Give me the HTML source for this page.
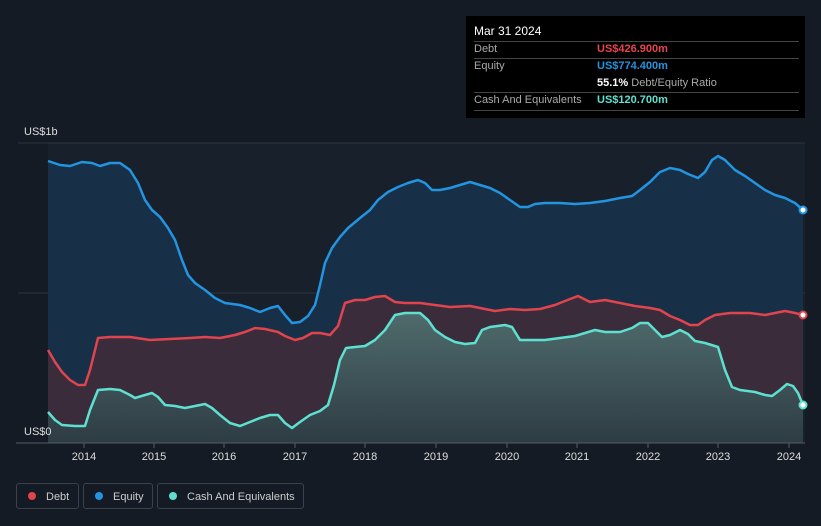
<!DOCTYPE html>
<html><head><style>
body{margin:0;width:821px;height:526px;background:#151b24;overflow:hidden;font-family:"Liberation Sans",sans-serif}
.tip{position:absolute;left:466px;top:16px;width:339px;height:102px;background:#000;color:#fff;font-size:11px}
.row{position:absolute;left:8px;width:325px;border-top:1px solid #444}
.l{position:absolute;left:0;color:#aaa}
.v{position:absolute;left:123px;font-weight:bold}
.leg{position:absolute;top:483px;height:26px;border:1px solid #3a414c;border-radius:3px;color:#ccc;font-size:11px;line-height:26px;box-sizing:border-box}
.dot{display:inline-block;width:8px;height:8px;border-radius:50%;margin:0 10px 0 11px;vertical-align:-0px}
</style></head><body>
<svg width="821" height="526" style="position:absolute;left:0;top:0">
<rect x="48" y="143" width="757" height="300" fill="#18202b"/>
<line x1="18" y1="143" x2="805" y2="143" fill="none" stroke="#2c333d"/>
<line x1="18" y1="293" x2="805" y2="293" stroke="#2c333d"/>
<path id="eq" fill="#173048" d="M48,161 L60,165 70,166 82,162 92,163 100,166 110,163 120,163 130,170 138,183 145,200 152,210 160,217 168,228 175,240 182,260 188,275 195,283 205,290 215,298 225,303 240,305 250,308 260,312 270,308 278,306 285,315 292,323 300,322 308,316 315,305 320,285 325,263 332,248 340,237 348,228 360,218 370,210 378,200 388,192 398,187 408,183 418,180 425,183 432,190 440,190 450,188 460,185 470,182 480,185 490,188 500,193 510,200 520,207 528,207 535,204 545,203 560,203 575,204 590,203 605,201 620,198 632,196 640,190 650,182 660,172 670,168 680,170 688,174 698,178 705,172 712,160 718,156 725,160 735,170 745,176 755,183 765,190 775,195 785,198 795,203 803,210 L803,443 48,443Z"/>
<path fill="#3a2c3a" d="M48,350 L55,362 62,372 70,380 78,385 85,385 90,370 98,338 110,337 130,337 150,340 170,339 190,338 205,337 220,338 235,335 245,332 255,328 265,329 278,332 285,336 295,340 303,338 312,333 320,333 330,335 338,326 345,303 355,300 365,300 375,297 385,296 395,302 405,303 420,303 435,305 450,307 470,306 485,309 495,311 510,309 525,310 540,309 555,305 565,301 578,296 590,302 605,300 620,303 635,306 650,308 660,310 670,316 680,320 690,325 698,325 705,320 715,315 730,313 750,313 765,315 775,313 785,311 795,313 803,315 L803,443 48,443Z"/>
<defs><linearGradient id="g" x1="0" y1="0" x2="0" y2="1"><stop offset="0" stop-color="#4f6b6c"/><stop offset="1" stop-color="#2e3c44"/></linearGradient></defs>
<path fill="url(#g)" d="M48,412 L55,420 62,425 75,426 85,426 90,410 98,390 110,389 120,390 130,395 135,398 145,395 152,393 158,397 165,405 175,406 185,408 195,406 205,404 212,408 220,415 230,423 240,426 250,422 260,418 270,415 278,415 285,423 292,428 300,422 310,415 320,411 328,405 334,385 340,360 346,348 355,347 365,346 375,340 385,330 395,315 405,313 420,313 428,320 435,330 445,337 455,342 465,344 475,343 482,330 490,327 505,325 512,327 520,340 530,340 545,340 560,338 575,336 585,333 595,330 605,332 620,332 632,328 640,323 648,323 655,330 662,337 670,335 680,330 688,334 695,341 705,343 718,347 725,370 732,387 740,390 755,392 765,395 772,396 780,390 787,384 793,386 798,393 803,405 L803,443 48,443Z"/>
<g fill="none" stroke-width="2.5" stroke-linejoin="round">
<path stroke="#2394e0" d="M48,161 L60,165 70,166 82,162 92,163 100,166 110,163 120,163 130,170 138,183 145,200 152,210 160,217 168,228 175,240 182,260 188,275 195,283 205,290 215,298 225,303 240,305 250,308 260,312 270,308 278,306 285,315 292,323 300,322 308,316 315,305 320,285 325,263 332,248 340,237 348,228 360,218 370,210 378,200 388,192 398,187 408,183 418,180 425,183 432,190 440,190 450,188 460,185 470,182 480,185 490,188 500,193 510,200 520,207 528,207 535,204 545,203 560,203 575,204 590,203 605,201 620,198 632,196 640,190 650,182 660,172 670,168 680,170 688,174 698,178 705,172 712,160 718,156 725,160 735,170 745,176 755,183 765,190 775,195 785,198 795,203 803,210"/>
<path stroke="#e0444e" d="M48,350 L55,362 62,372 70,380 78,385 85,385 90,370 98,338 110,337 130,337 150,340 170,339 190,338 205,337 220,338 235,335 245,332 255,328 265,329 278,332 285,336 295,340 303,338 312,333 320,333 330,335 338,326 345,303 355,300 365,300 375,297 385,296 395,302 405,303 420,303 435,305 450,307 470,306 485,309 495,311 510,309 525,310 540,309 555,305 565,301 578,296 590,302 605,300 620,303 635,306 650,308 660,310 670,316 680,320 690,325 698,325 705,320 715,315 730,313 750,313 765,315 775,313 785,311 795,313 803,315"/>
<path stroke="#5ee0d0" d="M48,412 L55,420 62,425 75,426 85,426 90,410 98,390 110,389 120,390 130,395 135,398 145,395 152,393 158,397 165,405 175,406 185,408 195,406 205,404 212,408 220,415 230,423 240,426 250,422 260,418 270,415 278,415 285,423 292,428 300,422 310,415 320,411 328,405 334,385 340,360 346,348 355,347 365,346 375,340 385,330 395,315 405,313 420,313 428,320 435,330 445,337 455,342 465,344 475,343 482,330 490,327 505,325 512,327 520,340 530,340 545,340 560,338 575,336 585,333 595,330 605,332 620,332 632,328 640,323 648,323 655,330 662,337 670,335 680,330 688,334 695,341 705,343 718,347 725,370 732,387 740,390 755,392 765,395 772,396 780,390 787,384 793,386 798,393 803,405"/>
</g>
<circle cx="803" cy="210" r="3.5" fill="#fff" stroke="#2394e0" stroke-width="2"/>
<circle cx="803" cy="315" r="3.5" fill="#fff" stroke="#e0444e" stroke-width="2"/>
<circle cx="803" cy="405" r="3.5" fill="#fff" stroke="#5ee0d0" stroke-width="2"/>
<line x1="16" y1="443" x2="805" y2="443" stroke="#555c66"/>
<g stroke="#555c66"><line x1="84" y1="443" x2="84" y2="448"/><line x1="154" y1="443" x2="154" y2="448"/><line x1="224" y1="443" x2="224" y2="448"/><line x1="295" y1="443" x2="295" y2="448"/><line x1="365" y1="443" x2="365" y2="448"/><line x1="436" y1="443" x2="436" y2="448"/><line x1="507" y1="443" x2="507" y2="448"/><line x1="577" y1="443" x2="577" y2="448"/><line x1="648" y1="443" x2="648" y2="448"/><line x1="718" y1="443" x2="718" y2="448"/><line x1="789" y1="443" x2="789" y2="448"/></g>
<g fill="#ddd" font-size="11" text-anchor="middle" font-family="Liberation Sans,sans-serif">
<text x="84" y="460">2014</text><text x="154" y="460">2015</text><text x="224" y="460">2016</text><text x="295" y="460">2017</text><text x="365" y="460">2018</text><text x="436" y="460">2019</text><text x="507" y="460">2020</text><text x="577" y="460">2021</text><text x="648" y="460">2022</text><text x="718" y="460">2023</text><text x="789" y="460">2024</text>
<text x="24" y="135" text-anchor="start">US$1b</text><text x="24" y="435" text-anchor="start">US$0</text>
</g>
</svg>
<div class="tip">
<div style="position:absolute;left:8px;top:8px;font-size:12px">Mar 31 2024</div>
<div class="row" style="top:25px"><span class="l" style="top:1px">Debt</span><span class="v" style="top:1px;color:#e8444e">US$426.900m</span></div>
<div class="row" style="top:42px"><span class="l" style="top:1px">Equity</span><span class="v" style="top:1px;color:#2394e0">US$774.400m</span><span style="position:absolute;left:123px;top:18px"><b>55.1%</b> <span style="color:#aaa">Debt/Equity Ratio</span></span></div>
<div class="row" style="top:76px"><span class="l" style="top:1px">Cash And Equivalents</span><span class="v" style="top:1px;color:#5ee0d0">US$120.700m</span></div>
<div class="row" style="top:94px"></div>
</div>
<div class="leg" style="left:16px;width:63px"><span class="dot" style="background:#e0444e"></span>Debt</div>
<div class="leg" style="left:83px;width:70px"><span class="dot" style="background:#2394e0"></span>Equity</div>
<div class="leg" style="left:157px;width:147px"><span class="dot" style="background:#5ee0d0"></span>Cash And Equivalents</div>
</body></html>
